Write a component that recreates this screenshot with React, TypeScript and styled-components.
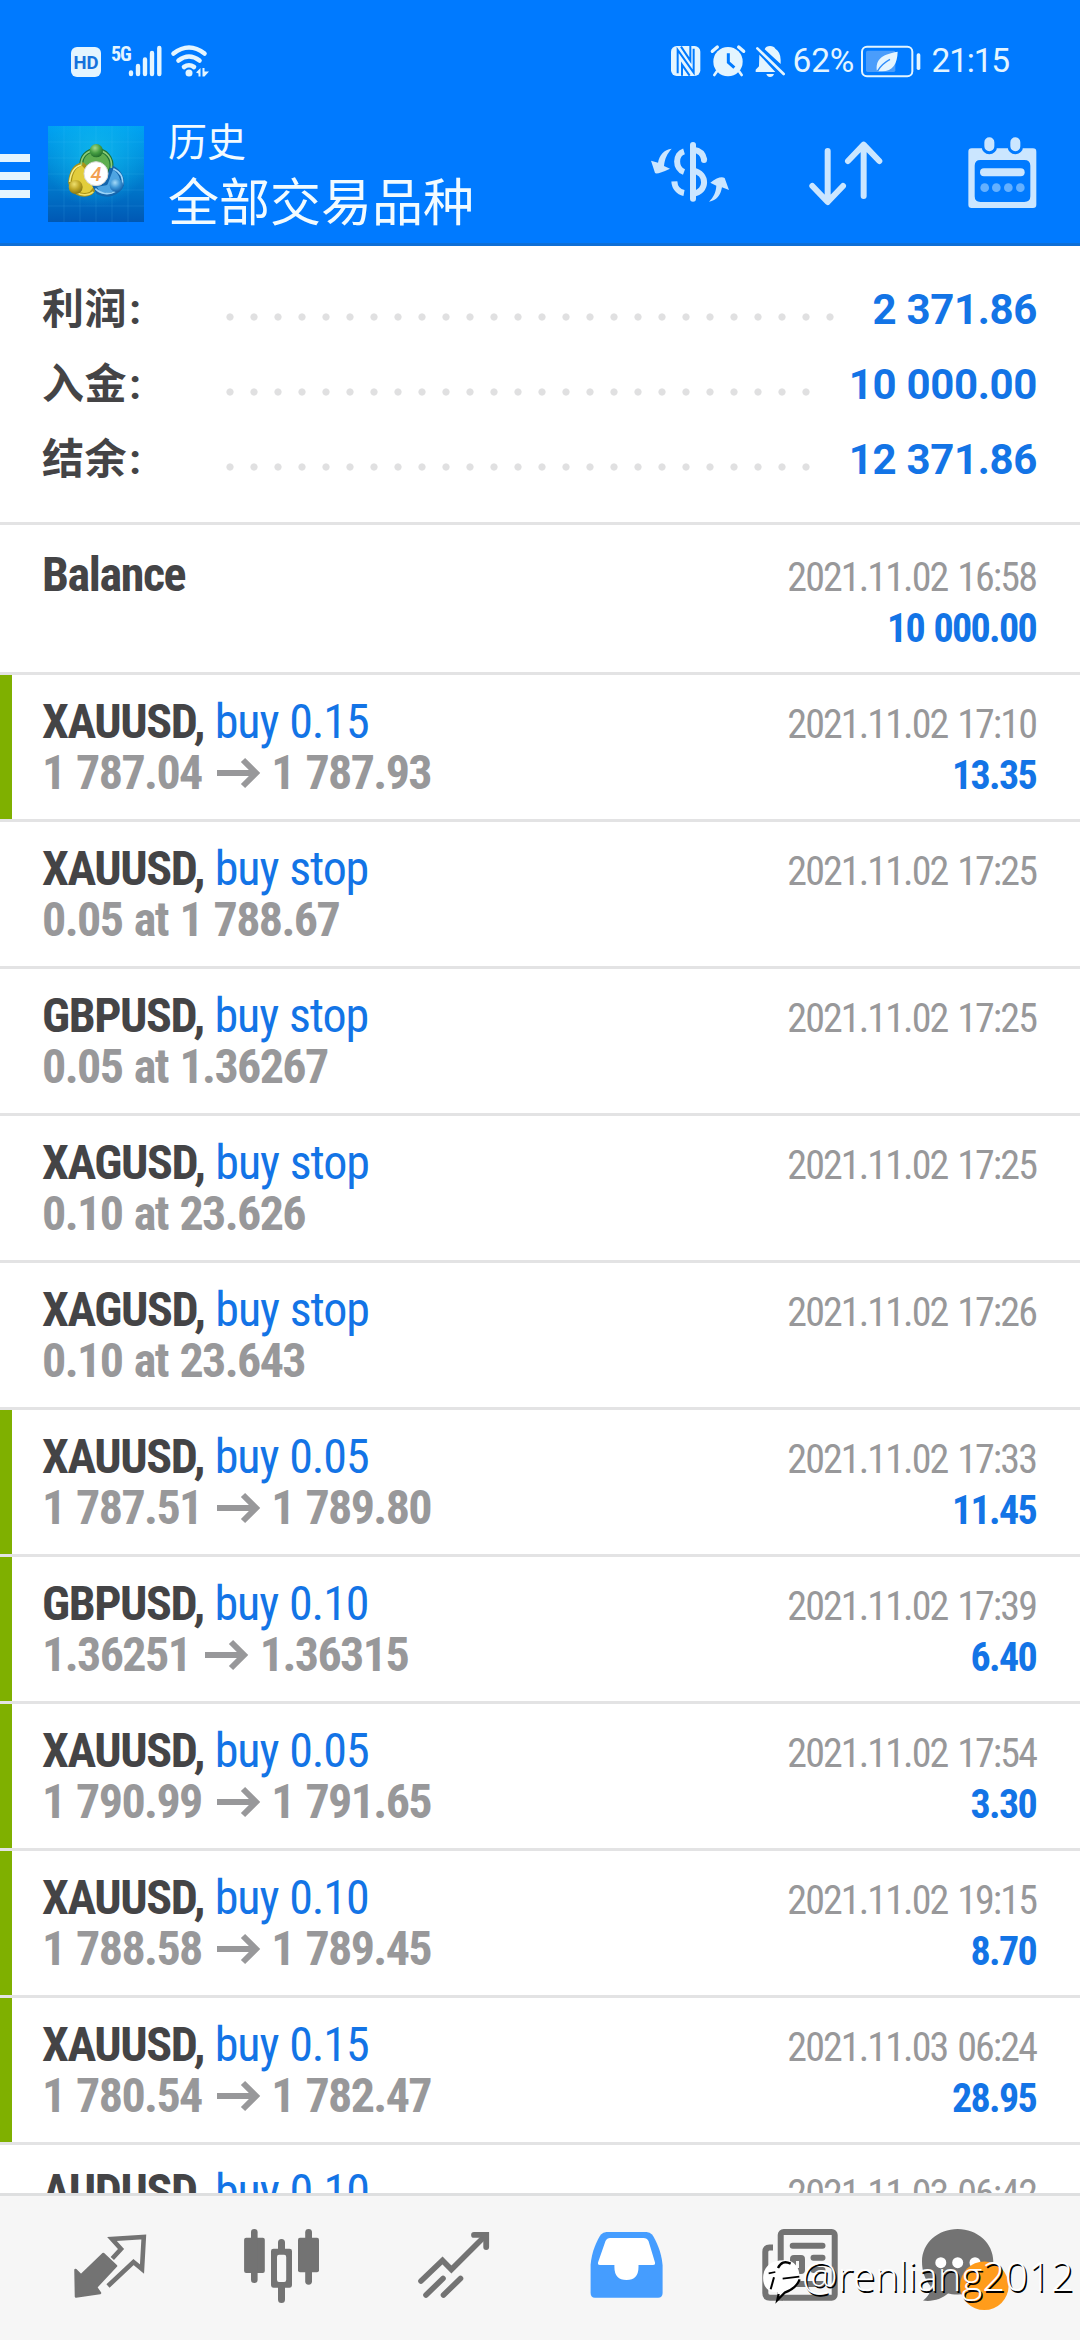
import React from "react";
import styled, { createGlobalStyle } from "styled-components";

const sans = `Roboto, "Noto Sans CJK SC", sans-serif`;
const condensed = `"Roboto Condensed", Roboto, "Noto Sans CJK SC", sans-serif`;
const blue = "#007aff";
const ice = "#e4f5ff";
const pale = "#cbe6ff";
const grey = "#737373";

const Global = createGlobalStyle`
  * { box-sizing: border-box; }
  body { margin: 0; background: #fff; }
`;

const Screen = styled.div`
  position: relative;
  display: flex;
  flex-direction: column;
  width: 1080px;
  height: 2340px;
  overflow: hidden;
  background: #fff;
  font-family: ${sans};
`;

const TopArea = styled.header`
  flex: none;
  height: 246px;
  background: ${blue};
  border-bottom: 3px solid #0f6fd6;
`;

const StatusBar = styled.div`
  display: flex;
  justify-content: space-between;
  height: 126px;
  padding: 36px 71px 0;
`;

const StatusGroup = styled.div`
  display: flex;
  height: 50px;
  align-items: center;
`;

const HdBadge = styled.span`
  width: 30px;
  height: 30px;
  margin: 2px 11px 0 0;
  border-radius: 6px;
  background: ${ice};
  color: #1672dc;
  font: 700 18.5px/32px ${sans};
  text-align: center;
`;

const NetLabel = styled.span`
  width: 17px;
  height: 34px;
  margin-left: -1px;
  color: ${ice};
  font: 700 20px/20px ${condensed};
  font-stretch: 75%;
  letter-spacing: -1px;
`;

const StatusText = styled.span<{ $ml: number; $w: number; $ls: number }>`
  width: ${(p) => p.$w}px;
  margin-left: ${(p) => p.$ml}px;
  color: ${ice};
  font: 400 33.5px/52px ${sans};
  letter-spacing: ${(p) => p.$ls}px;
  white-space: nowrap;
`;

const Glyph = styled.svg<{ $ml?: number }>`
  display: block;
  flex: none;
  overflow: visible;
  margin-left: ${(p) => p.$ml ?? 0}px;
`;

const AppBar = styled.div`
  display: flex;
  align-items: flex-start;
  height: 117px;
`;

const MenuButton = styled.div`
  display: flex;
  flex-direction: column;
  gap: 10px;
  width: 30px;
  margin: 28px 18px 0 0;
`;

const MenuLine = styled.i`
  height: 8px;
  background: ${ice};
`;

const Titles = styled.div`
  display: flex;
  flex-direction: column;
  flex: 1;
  margin: -3px 0 0 24px;
  color: #f2fbff;
  white-space: nowrap;
`;

const Title = styled.span<{ $size: number; $lh: number }>`
  font-size: ${(p) => p.$size}px;
  line-height: ${(p) => p.$lh}px;
`;

const Actions = styled.div`
  display: flex;
  margin: 10px 42.6px 0 0;
`;

const Summary = styled.section`
  flex: none;
  height: 279px;
  padding: 26px 43px 0 42px;
  border-bottom: 3px solid #e3e3e4;
`;

const SummaryRow = styled.div`
  display: flex;
  height: 75px;
  align-items: center;
  line-height: 75px;
`;

const SummaryLabel = styled.span`
  width: 184px;
  color: #444446;
  font-size: 42px;
  font-weight: 700;
  letter-spacing: 0.6px;
`;

const Colon = styled.span`
  margin-left: 2px;
`;

const Leader = styled.span`
  flex: 1;
  height: 8px;
  margin: 15px 25px 0 0;
  background: radial-gradient(circle at 4px 4px, #e0e0e1 3.2px, transparent 4px) 0 0 / 24px 8px repeat-x;
`;

const SummaryValue = styled.span`
  color: #1374e6;
  font-size: 42px;
  font-weight: 700;
  letter-spacing: -0.35px;
`;

const List = styled.main`
  display: flex;
  flex-direction: column;
  flex: 1;
  min-height: 0;
  overflow: hidden;
`;

const Row = styled.div<{ $closed?: boolean; $first?: boolean }>`
  flex: none;
  display: flex;
  justify-content: space-between;
  height: ${(p) => (p.$first ? 150 : 147)}px;
  padding: ${(p) => (p.$first ? 23 : 20)}px 44px 0 30px;
  border-bottom: 3px solid #e3e3e4;
  font-family: ${condensed};
  font-stretch: 75%;
  white-space: nowrap;
  background: linear-gradient(${(p) => (p.$closed ? "#7fb000, #7fb000" : "#fff, #fff")}) 0 0 / 12px 144px no-repeat;
`;

const Cell = styled.div<{ $right?: boolean }>`
  padding: ${(p) => (p.$right ? "4px 0 0" : "1px 0 0 12px")};
  text-align: ${(p) => (p.$right ? "right" : "left")};
`;

const Symbol = styled.div`
  height: 52px;
  color: #444446;
  font-size: 48px;
  font-weight: 700;
  letter-spacing: -1.4px;
  word-spacing: 1px;
  line-height: 52px;
`;

const Side = styled.span`
  color: #1374e6;
  font-weight: 400;
  letter-spacing: -1.1px;
`;

const Prices = styled.div`
  display: flex;
  align-items: center;
  height: 50px;
  color: #98989a;
  font-size: 48px;
  font-weight: 700;
  letter-spacing: -1.6px;
  word-spacing: 2px;
  line-height: 50px;
`;

const Stamp = styled.div`
  height: 51px;
  color: #98989a;
  font-size: 40px;
  letter-spacing: -1.9px;
  word-spacing: 2.5px;
  line-height: 51px;
`;

const Profit = styled.div`
  height: 51px;
  color: #1374e6;
  font-size: 40px;
  font-weight: 700;
  letter-spacing: -1.7px;
  word-spacing: 2px;
  line-height: 51px;
`;

const TabBar = styled.nav`
  flex: none;
  display: flex;
  height: 147px;
  padding: 24px 0 0 23.5px;
  border-top: 3px solid #dedfe0;
  background: #f6f6f6;
`;

const Tab = styled.div`
  display: flex;
  justify-content: center;
  width: 173px;
`;

const Watermark = styled.div`
  position: absolute;
  left: 762px;
  top: 2254px;
  display: flex;
  align-items: flex-start;
  height: 52px;
  color: #fff;
  font: 300 40px/52px "Open Sans", sans-serif;
  white-space: nowrap;
`;

const Handle = styled.span`
  line-height: 44px;
  text-shadow: 1.5px 1.5px 0.5px #000;
`;

const Logo = () => (
  <Glyph width={96} height={96} viewBox="12 12 288 288">
    <defs>
      <linearGradient id="sky" x1="0" y1="0" x2="0" y2="1">
        <stop offset="0" stopColor="#00a2f2" />
        <stop offset=".45" stopColor="#0087d6" />
        <stop offset="1" stopColor="#0058b4" />
      </linearGradient>
      <radialGradient id="glow" cx=".5" cy=".3" r=".55">
        <stop offset="0" stopColor="#12c0ee" stopOpacity=".75" />
        <stop offset="1" stopColor="#12c0ee" stopOpacity="0" />
      </radialGradient>
      <radialGradient id="green" cx=".4" cy=".3" r=".75">
        <stop offset="0" stopColor="#a5d98c" />
        <stop offset=".5" stopColor="#48a044" />
        <stop offset="1" stopColor="#1c6828" />
      </radialGradient>
      <radialGradient id="gold" cx=".4" cy=".3" r=".75">
        <stop offset="0" stopColor="#efe06e" />
        <stop offset=".5" stopColor="#c0a726" />
        <stop offset="1" stopColor="#7c7012" />
      </radialGradient>
      <radialGradient id="azure" cx=".4" cy=".3" r=".75">
        <stop offset="0" stopColor="#a4daf8" />
        <stop offset=".5" stopColor="#3f97d6" />
        <stop offset="1" stopColor="#0f5ba6" />
      </radialGradient>
    </defs>
    <rect x="12" y="12" width="288" height="288" fill="url(#sky)" />
    <rect x="12" y="12" width="288" height="288" fill="url(#glow)" />
    <path
      d="M60 12V300M108 12V300M156 12V300M204 12V300M252 12V300M12 60H300M12 108H300M12 156H300M12 204H300M12 252H300"
      stroke="#5cc8f5"
      strokeOpacity=".13"
      strokeWidth="3"
    />
    <g fill="none" strokeLinejoin="round">
      <path d="M157 84C128 84 110 104 112 132L134 172L182 172L202 138C206 108 186 84 157 84Z" stroke="#1f7434" strokeWidth="12" fill="#5fae50" />
      <path d="M116 126C90 130 80 152 78 182C84 212 112 226 140 214L160 190L130 140Z" stroke="#a89317" strokeWidth="11" fill="#e2cd3c" />
      <path d="M204 136C228 146 238 172 234 190C222 216 190 226 162 212L150 190L186 184Z" stroke="#1466ae" strokeWidth="11" fill="#4ea4e2" />
      <path d="M112 130C110 104 128 85 157 85C188 85 206 108 202 138" stroke="#8ccb78" strokeWidth="5" />
      <path d="M112 129C88 134 80 154 77 180" stroke="#f6ec86" strokeWidth="5" />
      <path d="M208 140C230 150 238 168 235 188M154 200C170 216 196 220 214 208" stroke="#9ad4f8" strokeWidth="5" />
      <path d="M98 212C114 222 134 220 148 210" stroke="#f0e068" strokeWidth="5" />
    </g>
    <circle cx="157" cy="86" r="20" fill="url(#green)" />
    <circle cx="95" cy="195" r="21" fill="url(#gold)" />
    <circle cx="217" cy="190" r="20" fill="url(#azure)" />
    <circle cx="156" cy="155" r="36" fill="#fff" stroke="#d9d9d6" strokeWidth="3" />
    <text x="156" y="176" fill="#f2a052" fontFamily="Roboto, sans-serif" fontSize="60" fontStyle="italic" fontWeight="500" textAnchor="middle">
      4
    </text>
  </Glyph>
);

const Signal = () => (
  <Glyph width={97} height={50} viewBox="112 36 97 50" $ml={-16}>
    <g stroke={ice} strokeWidth="4.4" strokeLinecap="round" fill="none">
      <path d="M131 72.5V74M138 66V74M145 59.5V74M152 53V74M159.3 48V74" />
    </g>
    <g stroke={ice} strokeWidth="4.6" strokeLinecap="round" fill="none">
      <path d="M173.5 53.5Q189 41.5 204.500 53.500" />
      <path d="M178.500 60.500Q189 52.500 199.500 60.500" />
      <path d="M184 67Q189 63.500 194 67" />
    </g>
    <circle cx="189" cy="73" r="3.5" fill={ice} />
    <path d="M196 72.500L200.500 68V76.500H198.500V73.500ZM202.500 68H204.500V71.500H209L204.500 76.500H202.500Z" fill={ice} />
  </Glyph>
);

const StatusIcons = () => (
  <Glyph width={121} height={50} viewBox="78 5 363 150">
    <g transform="translate(0 5)">
      <rect x="90" y="30" width="88" height="90" rx="17" fill={ice} />
      <path d="M110 112V42L158 110V38M120 32L148 74V30M146 119L123 86V119" fill="none" stroke={blue} strokeWidth="6" />
      <circle cx="261" cy="77" r="44" fill={ice} />
      <path d="M214 46L229 33M308 46L293 33" stroke={ice} strokeWidth="10" strokeLinecap="round" />
      <path d="M228 106L220 117M294 106L302 117" stroke={ice} strokeWidth="8" strokeLinecap="round" />
      <path d="M262 52V79L280 95" stroke={blue} strokeWidth="9" fill="none" />
      <path d="M371 40Q375 30 387 30Q399 30 403 38Q419 48 419 72V84Z" fill={ice} />
      <path d="M355 56L403 108H344V101L354 91Z" fill={ice} />
      <path d="M349 37L428 114" stroke={ice} strokeWidth="8" strokeLinecap="round" />
      <path d="M376 114H399Q396 123 387 123Q379 123 376 114Z" fill={ice} />
    </g>
  </Glyph>
);

const Battery = () => (
  <Glyph width={61} height={50} viewBox="660 0 183 150">
    <rect x="666" y="32" width="151" height="89" rx="15" fill="none" stroke={ice} strokeWidth="6" />
    <rect x="678" y="44" width="88" height="64" rx="5" fill="#4a9dfb" />
    <path d="M711 106C706 72 722 56 773 47C772 84 758 108 722 106Z" fill={ice} />
    <path d="M712 106Q724 84 750 70" fill="none" stroke="#2f8dfa" strokeWidth="4" />
    <rect x="830" y="52" width="11" height="50" rx="5" fill={ice} />
  </Glyph>
);

const CurrencyIcon = () => (
  <Glyph width={80} height={73.3} viewBox="30 300 240 220">
    <g fill="none" stroke={pale} strokeWidth="18">
      <path d="M159 327V488" strokeLinecap="round" />
      <path d="M132 346C105 354 104 398 132 408M103 436C104 455 116 468 132 471" />
      <path d="M160 341C178 343 190 353 193 372" />
      <path d="M160 404C204 412 202 468 160 473" />
    </g>
    <circle cx="192" cy="372" r="9" fill={pale} />
    <path d="M95 338C72 340 58 358 54 380L33 374L45 411Q50 417 90 398L72 390C74 368 82 352 95 338Z" fill={pale} />
    <path d="M207 497C230 494 242 478 246 454L267 462L254 426Q240 418 211 440L229 449C228 470 220 484 207 497Z" fill={pale} />
  </Glyph>
);

const SortIcon = () => (
  <Glyph width={75} height={73.3} viewBox="505 300 225 220" $ml={78.3}>
    <path
      d="M564 345V496M518 450L564 498L610 450M672 480V330M625 375L672 326L719 375"
      fill="none"
      stroke={pale}
      strokeWidth="18"
      strokeLinecap="round"
      strokeLinejoin="round"
    />
  </Glyph>
);

const CalendarIcon = () => (
  <Glyph width={70.7} height={73.3} viewBox="980 300 212 220" $ml={83.3}>
    <path
      fillRule="evenodd"
      fill={pale}
      d="M994 337H1178Q1188 337 1188 347V506Q1188 516 1178 516H994Q984 516 984 506V347Q984 337 994 337ZM1020 372Q1003 372 1003 389V481Q1003 498 1020 498H1152Q1170 498 1170 481V389Q1170 372 1152 372Z"
    />
    <path d="M1047 316V332M1125 316V332" stroke={blue} strokeWidth="46" strokeLinecap="round" />
    <path d="M1047 319V331M1125 319V331" stroke={pale} strokeWidth="30" strokeLinecap="round" />
    <path d="M1031 409H1141" stroke={pale} strokeWidth="24" strokeLinecap="round" />
    <g fill="#64b0ff">
      <circle cx="1033" cy="455" r="13" />
      <circle cx="1068" cy="455" r="13" />
      <circle cx="1104" cy="455" r="13" />
      <circle cx="1140" cy="455" r="13" />
    </g>
  </Glyph>
);

const QuotesIcon = () => (
  <Glyph width={90} height={90} viewBox="0 0 90 90">
    <path
      d="M38.3 34L51 46L31 67.300L35 73L11 76.500L10.500 50L16 55.500Z"
      fill={grey}
      stroke={grey}
      strokeWidth="2.500"
      strokeLinejoin="round"
    />
    <path d="M47.300 38.500L56 29L47 19L78.800 17L77 49L68.500 42L43 66" fill="none" stroke={grey} strokeWidth="4.600" />
  </Glyph>
);

const ChartIcon = () => (
  <Glyph width={90} height={90} viewBox="0 0 90 90">
    <g fill={grey}>
      <rect x="6.100" y="17.700" width="20.700" height="35.300" rx="2" />
      <rect x="13" y="9" width="6.600" height="54" rx="3.300" />
      <path
        fillRule="evenodd"
        d="M35.500 28.700H51.500Q54 28.700 54 31V65.300Q54 67.700 51.500 67.700H35.500Q33 67.700 33 65.300V31Q33 28.700 35.500 28.700ZM41 34.700Q39 34.700 39 37V59.700Q39 62 41 62H46.200Q48.200 62 48.200 59.700V37Q48.200 34.700 46.200 34.700Z"
      />
      <path d="M40 29V22.500Q40 19 43.500 19Q47 19 47 22.500V29ZM40 67H47V79.500Q47 83 43.500 83Q40 83 40 79.500Z" />
      <rect x="60" y="17.700" width="21" height="34.500" rx="2" />
      <rect x="67.200" y="9" width="6.800" height="55.700" rx="3.400" />
    </g>
  </Glyph>
);

const TradeIcon = () => (
  <Glyph width={90} height={90} viewBox="0 0 90 90">
    <g fill="none" stroke={grey} strokeWidth="5.600" strokeLinecap="round">
      <path d="M10 61L31.500 40.500L40.400 49.500L74 16" />
      <path d="M63 14.900H75.200V27" strokeWidth="5.800" />
      <path d="M32 58.500L15 75M49.500 58.500L32.500 75" />
    </g>
  </Glyph>
);

const HistoryIcon = () => (
  <Glyph width={90} height={90} viewBox="0 0 90 90">
    <path
      fill="#459dff"
      d="M6.600 73V45C7.500 32 13 20 17 14.500Q19 12 22.500 12H62.500Q66 12 68 14.500C72 20 77.500 32 78.600 45V73Q78.600 77.700 74 77.700H11Q6.600 77.700 6.600 73Z"
    />
    <path
      fill="#fff"
      d="M26 18H59.500Q63 18 64.500 21L71 42.500Q71.500 45 69 45H54.500V47Q54.500 60 42.500 60Q30.400 60 30.400 47V45H16Q13.500 45 14 42.500L21.500 21Q23 18 26 18Z"
    />
  </Glyph>
);

const NewsIcon = () => (
  <Glyph width={90} height={90} viewBox="0 0 90 90">
    <g fill="none" stroke={grey} strokeWidth="6">
      <rect x="23.700" y="12" width="54" height="65.700" rx="3" />
      <path d="M16 27.500H12.500Q8.300 27.500 8.300 32V73Q8.300 77.700 13 77.700H26" />
      <path d="M35.700 25.700H65.500M56.500 37.700H65.500M56.500 50H65.500M35.700 64H65.500" strokeLinecap="round" />
      <rect x="36" y="38" width="9" height="13" rx="1" />
    </g>
  </Glyph>
);

const ChatIcon = () => (
  <Glyph width={90} height={90} viewBox="0 0 90 90">
    <path
      fill={grey}
      d="M27.700 9C47 9 63.300 23 63.300 41.500C63.300 61 48 74 28 74.500C23 74.500 20 74 18 73.500C12 79 2 82 -7 80.500C-2 77 1 72 0.500 66C-5 60 -8 51 -8 41.500C-8 23 8 9 27.700 9Z"
    />
    <g fill="#fff">
      <circle cx="10.800" cy="42.700" r="5.500" />
      <circle cx="27.700" cy="42.700" r="5.500" />
      <circle cx="45" cy="42.700" r="5.500" />
    </g>
    <circle cx="54.300" cy="65.700" r="24.300" fill="#ff9c1b" />
  </Glyph>
);

const BirdMark = () => (
  <Glyph width={40} height={48} viewBox="36 108 120 144">
    <path d="M80 247L84 222C50 226 36 200 40 170C46 136 76 122 118 128C146 138 156 170 142 200C130 218 104 222 80 247Z" fill="#fff" />
    <path d="M122 137Q96 124 84 150" fill="none" stroke="#000" strokeWidth="7" />
    <path d="M72 178L62 214" fill="none" stroke="#000" strokeWidth="6" />
    <path d="M56 166L76 162M98 182L148 176" fill="none" stroke="#000" strokeWidth="5" />
    <path d="M149 184Q138 212 104 224L82 246L86 228" fill="none" stroke="#000" strokeWidth="7" />
  </Glyph>
);

const ArrowIcon = () => (
  <Glyph width={42} height={32} viewBox="0 0 42 32" $ml={15}>
    <path d="M0 16H39M26 3L39 16L26 29" fill="none" stroke="#98989a" strokeWidth="6" />
  </Glyph>
);

const PriceTo = styled.span`
  margin-left: 12.5px;
`;

type Deal = { symbol: string; side?: string; from?: string; to?: string; time: string; profit?: string };

const deals: Deal[] = [
  { symbol: "Balance", time: "2021.11.02 16:58", profit: "10 000.00" },
  { symbol: "XAUUSD,", side: "buy 0.15", from: "1 787.04", to: "1 787.93", time: "2021.11.02 17:10", profit: "13.35" },
  { symbol: "XAUUSD,", side: "buy stop", from: "0.05 at 1 788.67", time: "2021.11.02 17:25" },
  { symbol: "GBPUSD,", side: "buy stop", from: "0.05 at 1.36267", time: "2021.11.02 17:25" },
  { symbol: "XAGUSD,", side: "buy stop", from: "0.10 at 23.626", time: "2021.11.02 17:25" },
  { symbol: "XAGUSD,", side: "buy stop", from: "0.10 at 23.643", time: "2021.11.02 17:26" },
  { symbol: "XAUUSD,", side: "buy 0.05", from: "1 787.51", to: "1 789.80", time: "2021.11.02 17:33", profit: "11.45" },
  { symbol: "GBPUSD,", side: "buy 0.10", from: "1.36251", to: "1.36315", time: "2021.11.02 17:39", profit: "6.40" },
  { symbol: "XAUUSD,", side: "buy 0.05", from: "1 790.99", to: "1 791.65", time: "2021.11.02 17:54", profit: "3.30" },
  { symbol: "XAUUSD,", side: "buy 0.10", from: "1 788.58", to: "1 789.45", time: "2021.11.02 19:15", profit: "8.70" },
  { symbol: "XAUUSD,", side: "buy 0.15", from: "1 780.54", to: "1 782.47", time: "2021.11.03 06:24", profit: "28.95" },
  { symbol: "AUDUSD,", side: "buy 0.10", time: "2021.11.03 06:42" },
];

const totals = [
  ["利润", "2 371.86"],
  ["入金", "10 000.00"],
  ["结余", "12 371.86"],
];

const tabs = [QuotesIcon, ChartIcon, TradeIcon, HistoryIcon, NewsIcon, ChatIcon];

export default function App() {
  return (
    <Screen>
      <Global />
      <TopArea>
        <StatusBar>
          <StatusGroup>
            <HdBadge>HD</HdBadge>
            <NetLabel>5G</NetLabel>
            <Signal />
          </StatusGroup>
          <StatusGroup>
            <StatusIcons />
            <StatusText $ml={4.5} $w={67.5} $ls={-0.2}>62%</StatusText>
            <Battery />
            <StatusText $ml={10.5} $w={77.5} $ls={-1.2}>21:15</StatusText>
          </StatusGroup>
        </StatusBar>
        <AppBar>
          <MenuButton>
            <MenuLine />
            <MenuLine />
            <MenuLine />
          </MenuButton>
          <Logo />
          <Titles>
            <Title $size={39} $lh={40}>历史</Title>
            <Title $size={51} $lh={82}>全部交易品种</Title>
          </Titles>
          <Actions>
            <CurrencyIcon />
            <SortIcon />
            <CalendarIcon />
          </Actions>
        </AppBar>
      </TopArea>
      <Summary>
        {totals.map(([label, value]) => (
          <SummaryRow key={label}>
            <SummaryLabel>
              {label}
              <Colon>:</Colon>
            </SummaryLabel>
            <Leader />
            <SummaryValue>{value}</SummaryValue>
          </SummaryRow>
        ))}
      </Summary>
      <List>
        {deals.map((d, i) => (
          <Row key={i} $first={i === 0} $closed={!!d.to}>
            <Cell>
              <Symbol>
                {d.symbol} {d.side && <Side>{d.side}</Side>}
              </Symbol>
              <Prices>
                {d.from}
                {d.to && <ArrowIcon />}
                {d.to && <PriceTo>{d.to}</PriceTo>}
              </Prices>
            </Cell>
            <Cell $right>
              <Stamp>{d.time}</Stamp>
              {d.profit && <Profit>{d.profit}</Profit>}
            </Cell>
          </Row>
        ))}
      </List>
      <TabBar>
        {tabs.map((Icon, i) => (
          <Tab key={i}>
            <Icon />
          </Tab>
        ))}
      </TabBar>
      <Watermark>
        <BirdMark />
        <Handle>@renliang2012</Handle>
      </Watermark>
    </Screen>
  );
}
